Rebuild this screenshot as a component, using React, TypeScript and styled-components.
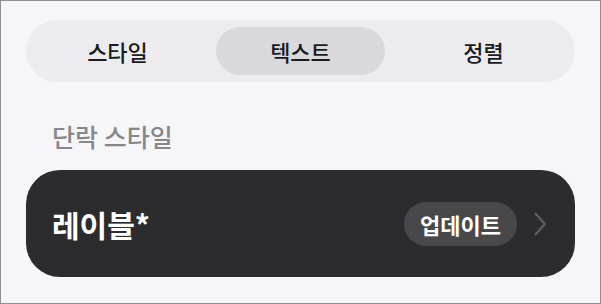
import React, { useState } from "react";
import styled, { createGlobalStyle } from "styled-components";

const Global = createGlobalStyle`
  html, body { margin: 0; padding: 0; background: #f6f6f9; }
  body { font-family: "Noto Sans CJK KR", "Noto Sans", sans-serif; }
  * { box-sizing: border-box; }
`;

const Frame = styled.div`
  width: 601px;
  height: 304px;
  border: 1px solid #8e8e93;
  background: #f6f6f9;
  padding: 19px 25px 0 25px;
  display: flex;
  flex-direction: column;
`;

const Segmented = styled.div`
  height: 62px;
  border-radius: 31px;
  background: #ececef;
  padding: 7px;
  display: grid;
  grid-template-columns: repeat(3, 1fr);
  column-gap: 14px;
`;

const Segment = styled.button<{ $active: boolean }>`
  border: none;
  margin: 0;
  padding: 0;
  height: 48px;
  border-radius: 24px;
  background: ${(p) => (p.$active ? "#d9d9dd" : "transparent")};
  color: #1c1c1e;
  font-family: "Noto Sans CJK KR", sans-serif;
  font-size: 22px;
  font-weight: 500;
  line-height: 48px;
  display: flex;
  align-items: center;
  justify-content: center;
  cursor: pointer;
`;

const SectionLabel = styled.div`
  margin-top: 41px;
  padding-left: 26px;
  height: 27px;
  line-height: 27px;
  font-size: 25px;
  font-weight: 500;
  color: #86868b;
`;

const Card = styled.div`
  margin-top: 20px;
  height: 107px;
  border-radius: 34px;
  background: #2c2c2e;
  display: flex;
  align-items: center;
  padding: 0 28px 0 26px;
`;

const CardTitle = styled.div`
  flex: 1;
  color: #ffffff;
  font-size: 30px;
  font-weight: 700;
  line-height: 34px;
`;

const Badge = styled.div`
  height: 44px;
  padding: 0 16px;
  border-radius: 22px;
  background: #48484b;
  color: #ffffff;
  font-size: 22px;
  font-weight: 700;
  display: flex;
  align-items: center;
`;

const Chevron = styled.svg`
  margin-left: 17px;
  width: 13px;
  height: 24px;
  display: block;
`;

export default function App() {
  const [tab, setTab] = useState(1);
  const tabs = ["스타일", "텍스트", "정렬"];
  return (
    <>
      <Global />
      <Frame>
        <Segmented>
          {tabs.map((t, i) => (
            <Segment key={t} $active={tab === i} onClick={() => setTab(i)}>
              {t}
            </Segment>
          ))}
        </Segmented>
        <SectionLabel>단락 스타일</SectionLabel>
        <Card>
          <CardTitle>레이블*</CardTitle>
          <Badge>업데이트</Badge>
          <Chevron viewBox="0 0 13 24">
            <path d="M1.5 1.5 L11 12 L1.5 22.5" fill="none" stroke="#5f5f63" strokeWidth="2" strokeLinecap="round" strokeLinejoin="round" />
          </Chevron>
        </Card>
      </Frame>
    </>
  );
}
